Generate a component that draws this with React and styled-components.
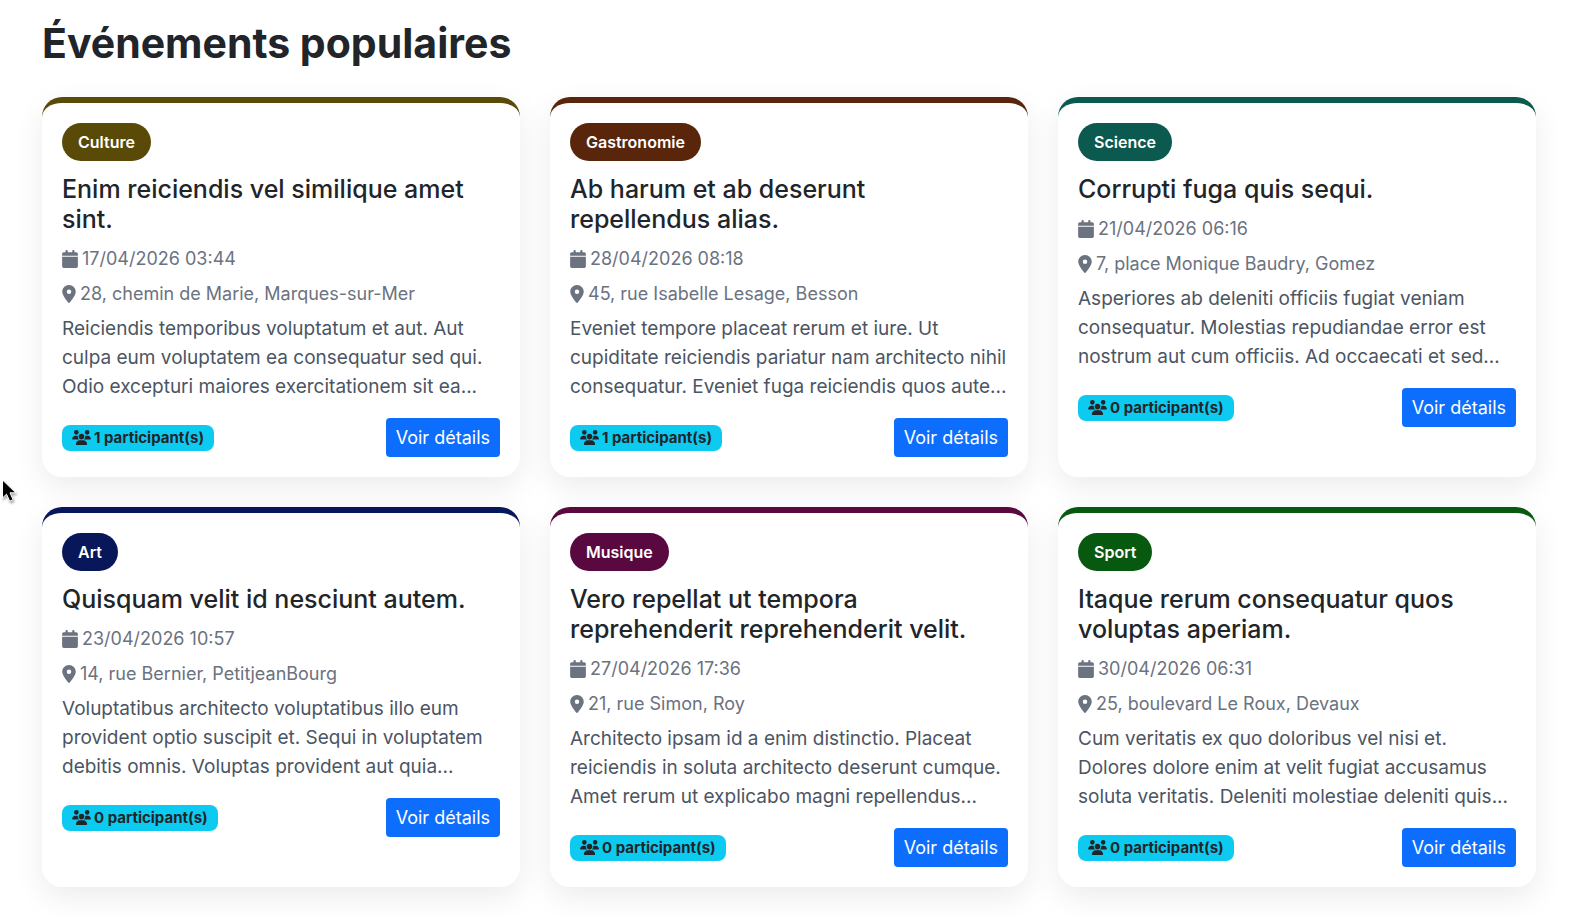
import React from 'react'
import styled, { createGlobalStyle } from 'styled-components'
import { FaCalendar, FaLocationDot, FaUsers } from 'react-icons/fa6'

const GlobalStyle = createGlobalStyle`
  * { box-sizing: border-box; }
  body {
    margin: 0;
    background: #fff;
    color: #212529;
    font-family: Inter, "Liberation Sans", sans-serif;
  }
`

// styled
const Page = styled.main`
  padding: 19px 34px 29px 42px;
`
const PageTitle = styled.h2`
  margin: 0 0 30px;
  font-size: 41px; line-height: 48px;
  font-weight: 700;
`
const EventGrid = styled.div`
  display: grid;
  grid-template-columns: repeat(3, 1fr);
  gap: 30px;
`
const Card = styled.article`
  padding: 20px;
  background: #fff;
  border-top: 6px solid ${(props) => props.$color};
  border-radius: 20px;
  box-shadow: 0 10px 30px rgba(0, 0, 0, 0.08);
`
const Category = styled.span`
  display: inline-block;
  padding: 0 16px;
  border-radius: 20px;
  background: ${(props) => props.$color};
  color: #fff;
  font-size: 16px; line-height: 38px;
  font-weight: 600;
  vertical-align: top;
`
const EventTitle = styled.h5`
  margin: 13px 0 10px;
  font-size: 25px; line-height: 30px;
  font-weight: 500;
`
const Meta = styled.p`
  display: flex; align-items: center;
  gap: 4px;
  margin: 0 0 6px;
  color: #6b7280;
  font-size: 18px; line-height: 29px;
`
const CalendarIcon = styled(FaCalendar)`
  width: 16px; height: 18px;
`
const PlaceIcon = styled(FaLocationDot)`
  width: 14px; height: 18px;
`
const UsersIcon = styled(FaUsers)`
  width: 19px; height: 15px;
`
const Description = styled.p`
  margin: 0 0 17px;
  color: #4b5563;
  font-size: 19px; line-height: 29px;
`
const CardFooter = styled.div`
  display: flex; justify-content: space-between; align-items: center;
`
const Participants = styled.span`
  display: flex; align-items: center;
  gap: 3px;
  height: 26px;
  padding: 0 10px;
  border-radius: 8px;
  background: #0dcaf0;
  font-size: 15px;
  font-weight: 700;
`
const DetailsLink = styled.a`
  padding: 0 10px;
  border-radius: 4px;
  background: #0d6efd;
  color: #fff;
  font-size: 18px; line-height: 39px;
  text-decoration: none;
`
const Pointer = styled.svg`
  position: fixed;
  left: 0; top: 477px;
  width: 20px; height: 30px;
  filter: drop-shadow(1px 2px 1px rgba(0, 0, 0, 0.35));
`

const events = [
  {
    category: 'Culture',
    color: '#594a08',
    title: 'Enim reiciendis vel similique amet sint.',
    date: '17/04/2026 03:44',
    place: '28, chemin de Marie, Marques-sur-Mer',
    text: 'Reiciendis temporibus voluptatum et aut. Aut culpa eum voluptatem ea consequatur sed qui. Odio excepturi maiores exercitationem sit ea...',
    participants: 1,
  },
  {
    category: 'Gastronomie',
    color: '#59260b',
    title: 'Ab harum et ab deserunt repellendus alias.',
    date: '28/04/2026 08:18',
    place: '45, rue Isabelle Lesage, Besson',
    text: 'Eveniet tempore placeat rerum et iure. Ut cupiditate reiciendis pariatur nam architecto nihil consequatur. Eveniet fuga reiciendis quos aute...',
    participants: 1,
  },
  {
    category: 'Science',
    color: '#0b594f',
    title: 'Corrupti fuga quis sequi.',
    date: '21/04/2026 06:16',
    place: '7, place Monique Baudry, Gomez',
    text: 'Asperiores ab deleniti officiis fugiat veniam consequatur. Molestias repudiandae error est nostrum aut cum officiis. Ad occaecati et sed...',
    participants: 0,
  },
  {
    category: 'Art',
    color: '#081759',
    title: 'Quisquam velit id nesciunt autem.',
    date: '23/04/2026 10:57',
    place: '14, rue Bernier, PetitjeanBourg',
    text: 'Voluptatibus architecto voluptatibus illo eum provident optio suscipit et. Sequi in voluptatem debitis omnis. Voluptas provident aut quia...',
    participants: 0,
  },
  {
    category: 'Musique',
    color: '#590840',
    title: 'Vero repellat ut tempora reprehenderit reprehenderit velit.',
    date: '27/04/2026 17:36',
    place: '21, rue Simon, Roy',
    text: 'Architecto ipsam id a enim distinctio. Placeat reiciendis in soluta architecto deserunt cumque. Amet rerum ut explicabo magni repellendus...',
    participants: 0,
  },
  {
    category: 'Sport',
    color: '#085910',
    title: 'Itaque rerum consequatur quos voluptas aperiam.',
    date: '30/04/2026 06:31',
    place: '25, boulevard Le Roux, Devaux',
    text: 'Cum veritatis ex quo doloribus vel nisi et. Dolores dolore enim at velit fugiat accusamus soluta veritatis. Deleniti molestiae deleniti quis...',
    participants: 0,
  },
]

const EventCard = ({ event }) => {
  return (
    <Card $color={event.color}>
      <Category $color={event.color}>{event.category}</Category>
      <EventTitle>{event.title}</EventTitle>
      <Meta><CalendarIcon />{event.date}</Meta>
      <Meta><PlaceIcon />{event.place}</Meta>
      <Description>{event.text}</Description>
      <CardFooter>
        <Participants><UsersIcon />{event.participants} participant(s)</Participants>
        <DetailsLink href="#">Voir détails</DetailsLink>
      </CardFooter>
    </Card>
  )
}

const App = () => {
  return (
    <>
      <GlobalStyle />
      <Page>
        <PageTitle>Événements populaires</PageTitle>
        <EventGrid>
          {events.map((event) => (
            <EventCard key={event.category} event={event} />
          ))}
        </EventGrid>
      </Page>
      <Pointer viewBox="0 0 20 30" aria-hidden="true">
        <path d="M2.500 3v18l4-3.800 3.200 7 3.400-1.500-3.100-6.900h5.800z" fill="#000" stroke="#fff" strokeWidth="1" />
      </Pointer>
    </>
  )
}

export default App
